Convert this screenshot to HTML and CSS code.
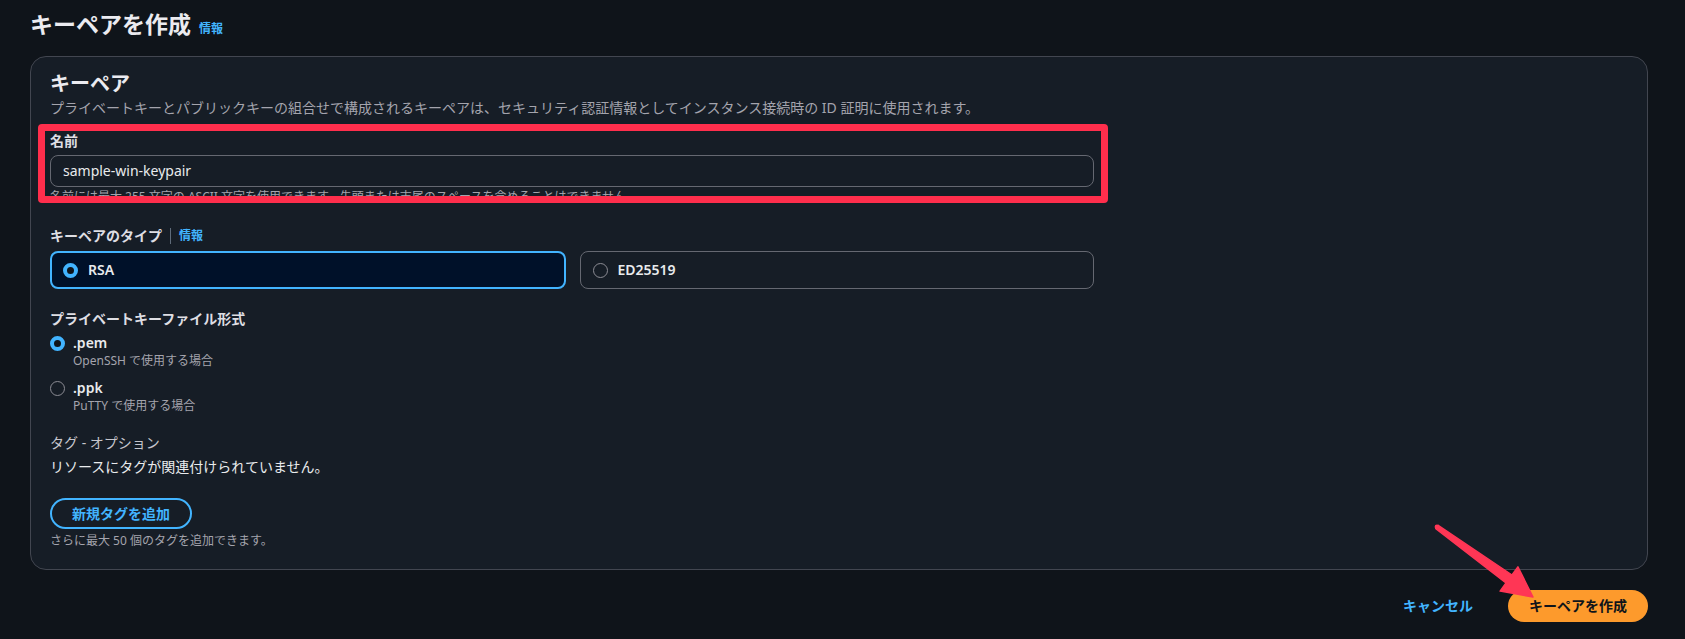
FILE: index.html
```html
<!DOCTYPE html>
<html lang="ja">
<head>
<meta charset="utf-8">
<title>キーペアを作成</title>
<link rel="stylesheet" href="styles.css">
</head>
<body>
<div class="page">
  <header class="page-header">
    <h1 class="page-title">キーペアを作成</h1>
    <a class="info-link info-link-title">情報</a>
  </header>

  <section class="card">
    <h2 class="card-title">キーペア</h2>
    <p class="card-desc">プライベートキーとパブリックキーの組合せで構成されるキーペアは、セキュリティ認証情報としてインスタンス接続時の ID 証明に使用されます。</p>

    <div class="field field-name">
      <div class="label">名前</div>
      <div class="input">sample-win-keypair</div>
      <div class="hint">名前には最大 255 文字の ASCII 文字を使用できます。先頭または末尾のスペースを含めることはできません。</div>
    </div>

    <div class="field field-type">
      <div class="label label-row">キーペアのタイプ<span class="sep"></span><a class="info-link">情報</a></div>
      <div class="tiles">
        <div class="tile tile-selected"><span class="radio radio-on"></span><span class="tile-text">RSA</span></div>
        <div class="tile"><span class="radio"></span><span class="tile-text">ED25519</span></div>
      </div>
    </div>

    <div class="field field-format">
      <div class="label">プライベートキーファイル形式</div>
      <div class="radio-group">
        <div class="radio-item">
          <span class="radio radio-on"></span>
          <div class="radio-body">
            <div class="radio-label">.pem</div>
            <div class="radio-desc">OpenSSH で使用する場合</div>
          </div>
        </div>
        <div class="radio-item">
          <span class="radio"></span>
          <div class="radio-body">
            <div class="radio-label">.ppk</div>
            <div class="radio-desc">PuTTY で使用する場合</div>
          </div>
        </div>
      </div>
    </div>

    <div class="field field-tags">
      <div class="tags-label">タグ - オプション</div>
      <div class="tags-empty">リソースにタグが関連付けられていません。</div>
      <button class="btn-outline">新規タグを追加</button>
      <div class="hint hint-tags">さらに最大 50 個のタグを追加できます。</div>
    </div>
  </section>

  <footer class="actions">
    <button class="btn-link">キャンセル</button>
    <button class="btn-primary">キーペアを作成</button>
  </footer>

  <div class="annot-box"></div>
  <svg class="annot-arrow" width="1685" height="639" viewBox="0 0 1685 639">
    <polygon points="1438.2,525.4 1512,575 1517.9,566.9 1533,597 1500.1,591.1 1506,583 1435.8,528.6" fill="#ff3655" stroke="#ff3655" stroke-width="1.5" stroke-linejoin="round"/>
    <circle cx="1437" cy="527" r="2.4" fill="#ff3655"/>
  </svg>
</div>
</body>
</html>
```

FILE: styles.css
```css
* { box-sizing: border-box; }

html, body {
  margin: 0;
  padding: 0;
  background: #0f141a;
}

body {
  font-family: "Noto Sans", "Noto Sans CJK JP", sans-serif;
  color: #dedee3;
  font-size: 14px;
  line-height: 20px;
}

.page {
  position: relative;
  width: 1685px;
  height: 639px;
  padding: 8px 37px 0 30px;
  overflow: hidden;
}

.page-header {
  display: flex;
  align-items: baseline;
  gap: 8px;
  height: 32px;
}

.page-title {
  margin: 0;
  font-size: 23px;
  line-height: 32px;
  font-weight: 700;
  color: #ebebf0;
}

.info-link {
  color: #42b4ff;
  font-size: 12px;
  font-weight: 700;
  line-height: 16px;
}

.card {
  margin-top: 16px;
  background: #161d26;
  border: 1px solid #424650;
  border-radius: 16px;
  padding: 15px 19px 19px 19px;
  height: 514px;
}

.card-title {
  margin: 0;
  font-size: 20px;
  line-height: 24px;
  font-weight: 700;
  color: #ebebf0;
}

.card-desc {
  margin: 2px 0 0 0;
  font-size: 14px;
  line-height: 20px;
  color: #a4a4ad;
}

.field { width: 1044px; }

.field-name { margin-top: 13px; }

.label {
  font-size: 14px;
  line-height: 20px;
  font-weight: 700;
  color: #dedee3;
}

.label-row {
  display: flex;
  align-items: center;
}

.sep {
  display: inline-block;
  width: 1px;
  height: 16px;
  background: #5f6b7a;
  margin: 0 8px;
}

.input {
  margin-top: 4px;
  height: 32px;
  border: 1px solid #656871;
  border-radius: 8px;
  padding: 5px 12px;
  font-size: 14px;
  line-height: 20px;
  color: #e9ebed;
}

.hint {
  margin-top: 2px;
  font-size: 12px;
  line-height: 16px;
  color: #a4a4ad;
}

.field-type { margin-top: 21px; }

.tiles {
  display: flex;
  gap: 14px;
  margin-top: 5px;
}

.tile {
  flex: 1;
  height: 38px;
  border: 1px solid #656871;
  border-radius: 8px;
  display: flex;
  align-items: center;
  padding-left: 12px;
}

.tile-selected {
  border: 2px solid #42b4ff;
  background: #001129;
  padding-left: 11px;
}

.tile-text {
  margin-left: 10px;
  font-size: 14px;
  font-weight: 600;
  color: #e9ebed;
}

.radio {
  flex: none;
  display: inline-block;
  width: 15px;
  height: 15px;
  border-radius: 50%;
  border: 1.5px solid #8c8c94;
}

.radio-on {
  border: 4.5px solid #42b4ff;
  background: #0f141a;
}

.field-format { margin-top: 20px; }

.radio-group {
  display: flex;
  flex-direction: column;
  gap: 9px;
  margin-top: 4px;
}

.radio-item {
  display: flex;
  align-items: flex-start;
}

.radio-item .radio { margin-top: 2.5px; }

.radio-body { margin-left: 8px; }

.radio-label {
  font-size: 14px;
  line-height: 20px;
  font-weight: 600;
  color: #e9ebed;
}

.radio-desc {
  font-size: 12px;
  line-height: 16px;
  color: #a4a4ad;
}

.field-tags { margin-top: 19px; }

.tags-label {
  font-size: 14px;
  line-height: 20px;
  color: #c6c6cd;
}

.tags-empty {
  margin-top: 4px;
  font-size: 14px;
  line-height: 20px;
  color: #e9ebed;
}

.btn-outline {
  margin-top: 21px;
  height: 31px;
  padding: 0 20px;
  border: 2px solid #42b4ff;
  border-radius: 20px;
  background: transparent;
  color: #42b4ff;
  font-family: inherit;
  font-size: 14px;
  font-weight: 700;
  line-height: 20px;
}

.hint-tags { margin-top: 4px; }

.actions {
  display: flex;
  justify-content: flex-end;
  align-items: center;
  gap: 15px;
  margin-top: 20px;
}

.btn-link {
  border: none;
  background: transparent;
  color: #42b4ff;
  font-family: inherit;
  font-size: 14px;
  font-weight: 700;
  line-height: 20px;
  padding: 6px 20px;
}

.btn-primary {
  border: none;
  height: 32px;
  padding: 0 21px;
  border-radius: 20px;
  background-color: #fd9a2c;
  color: #0f141a;
  font-family: inherit;
  font-size: 14px;
  font-weight: 700;
  line-height: 20px;
}

.annot-box {
  position: absolute;
  left: 38px;
  top: 124px;
  width: 1070px;
  height: 79px;
  border: 7px solid #ff2e4c;
  border-radius: 4px;
}

.annot-arrow {
  position: absolute;
  left: 0;
  top: 0;
  pointer-events: none;
}
```
